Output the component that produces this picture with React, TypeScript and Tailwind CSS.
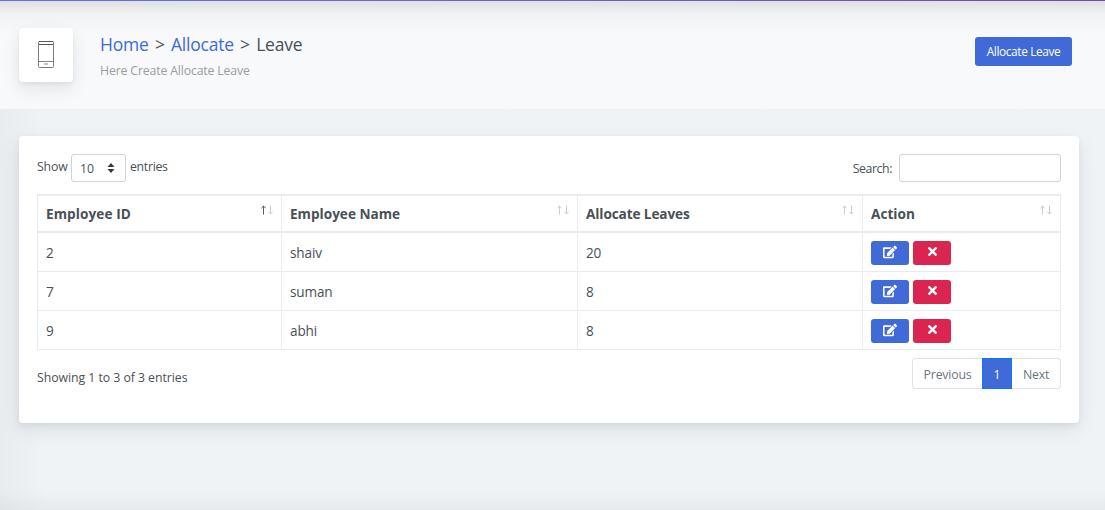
import React from "react";
import { FaTimes, FaEdit } from "react-icons/fa";

const rows = [
  { id: 2, name: "shaiv", leaves: 20 },
  { id: 7, name: "suman", leaves: 8 },
  { id: 9, name: "abhi", leaves: 8 },
];

const columns = [
  { label: "Employee ID", width: "w-[244px]", sorted: true, spacing: "tracking-[0.08px]" },
  { label: "Employee Name", width: "w-[296px]", sorted: false, spacing: "tracking-[0px]" },
  { label: "Allocate Leaves", width: "w-[285px]", sorted: false, spacing: "tracking-[-0.1px]" },
  { label: "Action", width: "w-[198px]", sorted: false, spacing: "tracking-[0.02px]" },
];

function PhoneIcon() {
  return (
    <svg width="16" height="27" viewBox="0 0 16 27" fill="none" strokeWidth="1">
      <rect x="0.5" y="0.5" width="15" height="26" rx="1" stroke="#7c7c7c" />
      <path d="M1 0.5H15M1 3.5H15" stroke="#555" />
      <path d="M1 20.5H15M6 23H10" stroke="#858585" />
    </svg>
  );
}

function SortIcon({ active }: { active: boolean }) {
  return (
    <svg width="13" height="10" viewBox="0 0 13 10" fill="none" strokeWidth="1">
      <path d="M3.5 9.5V1M1.3 3.2L3.5 1L5.7 3.2" stroke={active ? "#565c63" : "#cbcdd0"} />
      <path d="M10.5 0.5V9M8.3 6.8L10.5 9L12.7 6.8" stroke="#cbcdd0" />
    </svg>
  );
}

export default function App() {
  return (
    <div className="flex h-[510px] w-[1105px] flex-col overflow-hidden bg-[#eff3f6] bg-linear-to-r from-[#e8ecef] to-[#eff3f6] to-[45px] font-['Open_Sans',sans-serif] text-[#495057]">
      <div className="h-px shrink-0 bg-linear-to-r from-[#6673d6] to-[#764ba2]" />
      <header className="flex h-[108px] shrink-0 items-start bg-[#f8f9fb] bg-linear-to-b from-[#dfe0e2] via-[#f1f2f4] via-12% to-[#f8f9fb] to-30% pr-[33px] pl-[19px]">
        <div className="mt-[27px] flex size-[54px] items-center justify-center rounded bg-white pb-[2px] shadow-[0_7px_18px_rgba(18,21,35,0.09),0_2px_4px_rgba(18,21,35,0.06)]">
          <PhoneIcon />
        </div>
        <div className="mt-[30px] ml-[27px] flex-1">
          <h1 className="flex h-[27px] items-center gap-[6.3px] text-[17.5px] tracking-[-0.22px] whitespace-nowrap">
            <a className="text-[#3f6ad8]">Home</a>
            <span>&gt;</span>
            <a className="text-[#3f6ad8]">Allocate</a>
            <span>&gt;</span>
            <span>Leave</span>
          </h1>
          <p className="mt-[3px] text-[12.3px] leading-[20px] tracking-[-0.16px] text-[#9a9da0]">Here Create Allocate Leave</p>
        </div>
        <button className="mt-[36px] h-[29px] w-[97px] rounded-[3px] bg-[#3f6ad8] pt-px text-[11.9px] tracking-[-0.4px] whitespace-nowrap text-white">
          Allocate Leave
        </button>
      </header>
      <main className="mt-[27px] ml-[19px] flex h-[287px] w-[1060px] shrink-0 flex-col rounded bg-white px-[18px] pt-[18px] shadow-[0_7px_20px_rgba(18,21,35,0.08),0_3px_6px_rgba(18,21,35,0.06)]">
        <div className="flex h-[28px] text-[12.3px] tracking-[-0.12px]">
          <span className="w-[31px] leading-[26px]">Show</span>
          <div className="ml-[3px] flex w-[55px] items-center justify-between rounded-[3px] border border-[#ced4da] pr-[10px] pl-[8px]">
            <span className="pt-[2px]">10</span>
            <svg width="8" height="10" viewBox="0 0 8 10" fill="#343a40">
              <path d="M4 0L7.5 4H0.5ZM4 10L0.5 6H7.5Z" />
            </svg>
          </div>
          <span className="ml-[4px] flex-1 tracking-[-0.3px] leading-[26px]">entries</span>
          <span className="mr-[7px] tracking-[-0.4px] leading-[29px]">Search:</span>
          <input className="w-[162px] rounded-[3px] border border-[#ced4da]" />
        </div>
        <table className="mt-[12px] w-[1024px] table-fixed border-separate border-spacing-0 border-t-2 border-l border-[#e9ecef] text-[13.6px] tracking-[-0.15px]">
          <thead>
            <tr className="h-[37px]">
              {columns.map((c) => (
                <th key={c.label} className={`${c.width} border-r border-b-2 border-[#e9ecef] p-0 pl-2 text-left font-bold`}>
                  <div className="flex h-[35px] justify-between pr-[8px]">
                    <span className={`leading-[36px] text-[13.6px] ${c.spacing}`}>{c.label}</span>
                    <span className="mt-[9px]"><SortIcon active={c.sorted} /></span>
                  </div>
                </th>
              ))}
            </tr>
          </thead>
          <tbody>
            {rows.map((r) => (
              <tr key={r.id} className="h-[39px]">
                <td className="border-r border-b border-[#e9ecef] p-0 pt-[2px] pl-2">{r.id}</td>
                <td className="border-r border-b border-[#e9ecef] p-0 pt-[2px] pl-2">{r.name}</td>
                <td className="border-r border-b border-[#e9ecef] p-0 pt-[2px] pl-2">{r.leaves}</td>
                <td className="border-r border-b border-[#e9ecef] p-0 pt-[2px] pl-2">
                  <div className="flex gap-1">
                    <button className="flex h-6 w-[38px] items-start justify-center rounded-[3px] bg-[#3f6ad8] pt-[4px] text-white">
                      <FaEdit size={14} />
                    </button>
                    <button className="flex h-6 w-[38px] items-start justify-center rounded-[3px] bg-[#d92550] pt-[4px] text-white">
                      <FaTimes size={13} />
                    </button>
                  </div>
                </td>
              </tr>
            ))}
          </tbody>
        </table>
        <div className="mt-[8px] flex h-[31px] justify-between text-[12.3px]">
          <span className="tracking-[-0.05px] leading-[39px]">Showing 1 to 3 of 3 entries</span>
          <nav className="flex text-center tracking-[-0.2px] leading-[31px] text-[#6c757d]">
            <span className="w-[70px] rounded-l-[4px] border border-r-0 border-[#dee2e6]">Previous</span>
            <span className="w-[30px] border border-[#007bff] bg-[#3f6ad8] text-white">1</span>
            <span className="w-[49px] rounded-r-[4px] border border-l-0 border-[#dee2e6]">Next</span>
          </nav>
        </div>
      </main>
      <div className="mt-[67px] h-5 shrink-0 bg-linear-to-b from-transparent to-[#1215230a]" />
    </div>
  );
}
